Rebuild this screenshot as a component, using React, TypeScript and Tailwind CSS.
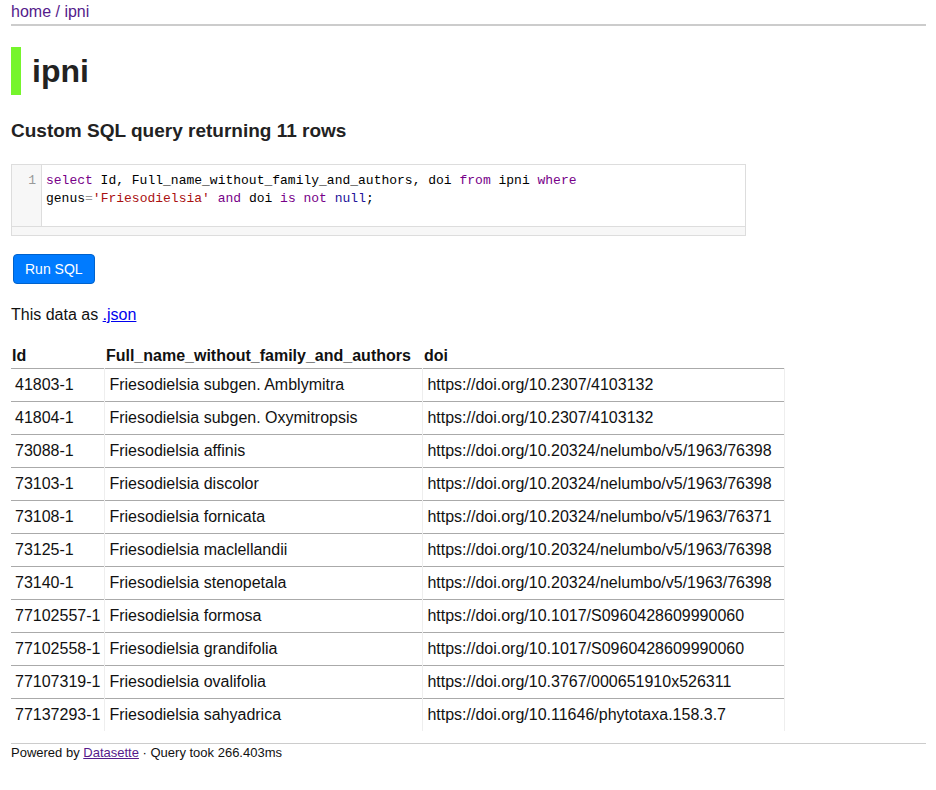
import React from "react";

const rows: [string, string, string][] = [
  ["41803-1", "Friesodielsia subgen. Amblymitra", "https://doi.org/10.2307/4103132"],
  ["41804-1", "Friesodielsia subgen. Oxymitropsis", "https://doi.org/10.2307/4103132"],
  ["73088-1", "Friesodielsia affinis", "https://doi.org/10.20324/nelumbo/v5/1963/76398"],
  ["73103-1", "Friesodielsia discolor", "https://doi.org/10.20324/nelumbo/v5/1963/76398"],
  ["73108-1", "Friesodielsia fornicata", "https://doi.org/10.20324/nelumbo/v5/1963/76371"],
  ["73125-1", "Friesodielsia maclellandii", "https://doi.org/10.20324/nelumbo/v5/1963/76398"],
  ["73140-1", "Friesodielsia stenopetala", "https://doi.org/10.20324/nelumbo/v5/1963/76398"],
  ["77102557-1", "Friesodielsia formosa", "https://doi.org/10.1017/S0960428609990060"],
  ["77102558-1", "Friesodielsia grandifolia", "https://doi.org/10.1017/S0960428609990060"],
  ["77107319-1", "Friesodielsia ovalifolia", "https://doi.org/10.3767/000651910x526311"],
  ["77137293-1", "Friesodielsia sahyadrica", "https://doi.org/10.11646/phytotaxa.158.3.7"],
];

export default function App() {
  return (
    <div
      className="bg-white text-[#111] pl-[11px] pr-[10px] min-h-[790px]"
      style={{ fontFamily: '"Liberation Sans", Arial, Helvetica, sans-serif' }}
    >
      <div className="border-b-2 border-[#cccccc] pt-[3px] pb-[3px]">
        <p className="text-[16px] leading-[18px] text-[#551a8b]">
          <a href="#" className="text-[#551a8b]">home</a> / <a href="#" className="text-[#551a8b]">ipni</a>
        </p>
      </div>

      <h1 className="mt-[21px] border-l-[10px] border-[#76f52c] pl-[11px] text-[32px] leading-[48px] font-bold text-[#222]">
        ipni
      </h1>

      <h2 className="mt-[22px] text-[19px] leading-[28px] font-bold text-[#222]">
        Custom SQL query returning 11 rows
      </h2>

      <div className="mt-[19px] w-[735px] border border-[#dddddd] bg-white">
        <div className="flex h-[61px]">
          <div className="w-[30px] shrink-0 bg-[#f7f7f7] border-r border-[#dddddd] pt-[7px] pr-[5px] text-right text-[13px] leading-[18px] text-[#999]"
            style={{ fontFamily: '"Liberation Mono", "Courier New", monospace' }}>
            1
          </div>
          <div
            className="pt-[7px] pl-[4px] text-[13px] leading-[18px] text-black whitespace-pre"
            style={{ fontFamily: '"Liberation Mono", "Courier New", monospace' }}
          >
            <div>
              <span className="text-[#770088]">select</span> Id, Full_name_without_family_and_authors, doi{" "}
              <span className="text-[#770088]">from</span> ipni <span className="text-[#770088]">where</span>
            </div>
            <div>
              genus<span className="text-[#999]">=</span><span className="text-[#aa1111]">'Friesodielsia'</span>{" "}
              <span className="text-[#770088]">and</span> doi <span className="text-[#770088]">is</span>{" "}
              <span className="text-[#770088]">not</span> <span className="text-[#221199]">null</span>;
            </div>
          </div>
        </div>
        <div className="h-[9px] border-t border-[#dddddd] bg-[#f7f7f7]"></div>
      </div>

      <button className="mt-[18px] ml-[2px] block rounded-[4px] border border-[#0062cc] bg-[#007bff] px-[11px] py-[4px] text-[14px] leading-[20px] text-white">
        Run SQL
      </button>

      <p className="mt-[19px] text-[16px] leading-[24px]">
        This data as <a href="#" className="text-[#0000ee] underline">.json</a>
      </p>

      <table className="mt-[16px] border-collapse text-[16px] leading-[24px]">
        <thead>
          <tr>
            <th className="pt-[1px] pl-[1px] pr-[12px] text-left font-bold whitespace-nowrap">Id</th>
            <th className="pt-[1px] pl-[1px] pr-[12px] text-left font-bold whitespace-nowrap">Full_name_without_family_and_authors</th>
            <th className="pt-[1px] pl-[1px] pr-[12px] text-left font-bold whitespace-nowrap">doi</th>
          </tr>
        </thead>
        <tbody>
          {rows.map((r) => (
            <tr key={r[0]}>
              <td className="border-t border-t-[#aaaaaa] border-r border-r-[#eeeeee] p-[4px] whitespace-nowrap align-top">{r[0]}</td>
              <td className="border-t border-t-[#aaaaaa] border-r border-r-[#eeeeee] p-[4px] whitespace-nowrap align-top">{r[1]}</td>
              <td className="border-t border-t-[#aaaaaa] border-r border-r-[#eeeeee] p-[4px] pr-[12px] whitespace-nowrap align-top">{r[2]}</td>
            </tr>
          ))}
        </tbody>
      </table>

      <div className="mt-[12px] border-t border-[#cccccc] text-[13px] leading-[18px]">
        Powered by <a href="#" className="text-[#551a8b] underline">Datasette</a> · Query took 266.403ms
      </div>
    </div>
  );
}
